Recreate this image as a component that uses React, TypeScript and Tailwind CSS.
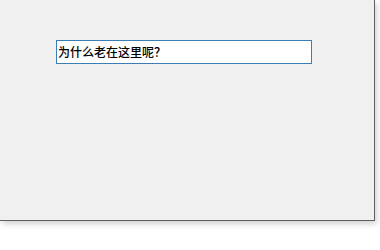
export default function App() {
  return (
    <div className="w-[380px] h-[250px] bg-white overflow-hidden">
      <div className="w-[375px] h-[221px] bg-[#f0f0f0] border-r border-b border-[#5f5f5f] shadow-[2px_3px_6px_rgba(0,0,0,0.18)] pt-[40px] pl-[56px]">
        <div className="w-[256px] h-[24px] bg-white border border-[#3c7db3] flex items-center pl-px">
          <span
            className="text-[12px] leading-none text-black font-medium"
            style={{ fontFamily: '"Noto Sans CJK SC", "Liberation Sans", sans-serif' }}
          >
            为什么老在这里呢？
          </span>
        </div>
      </div>
    </div>
  );
}
